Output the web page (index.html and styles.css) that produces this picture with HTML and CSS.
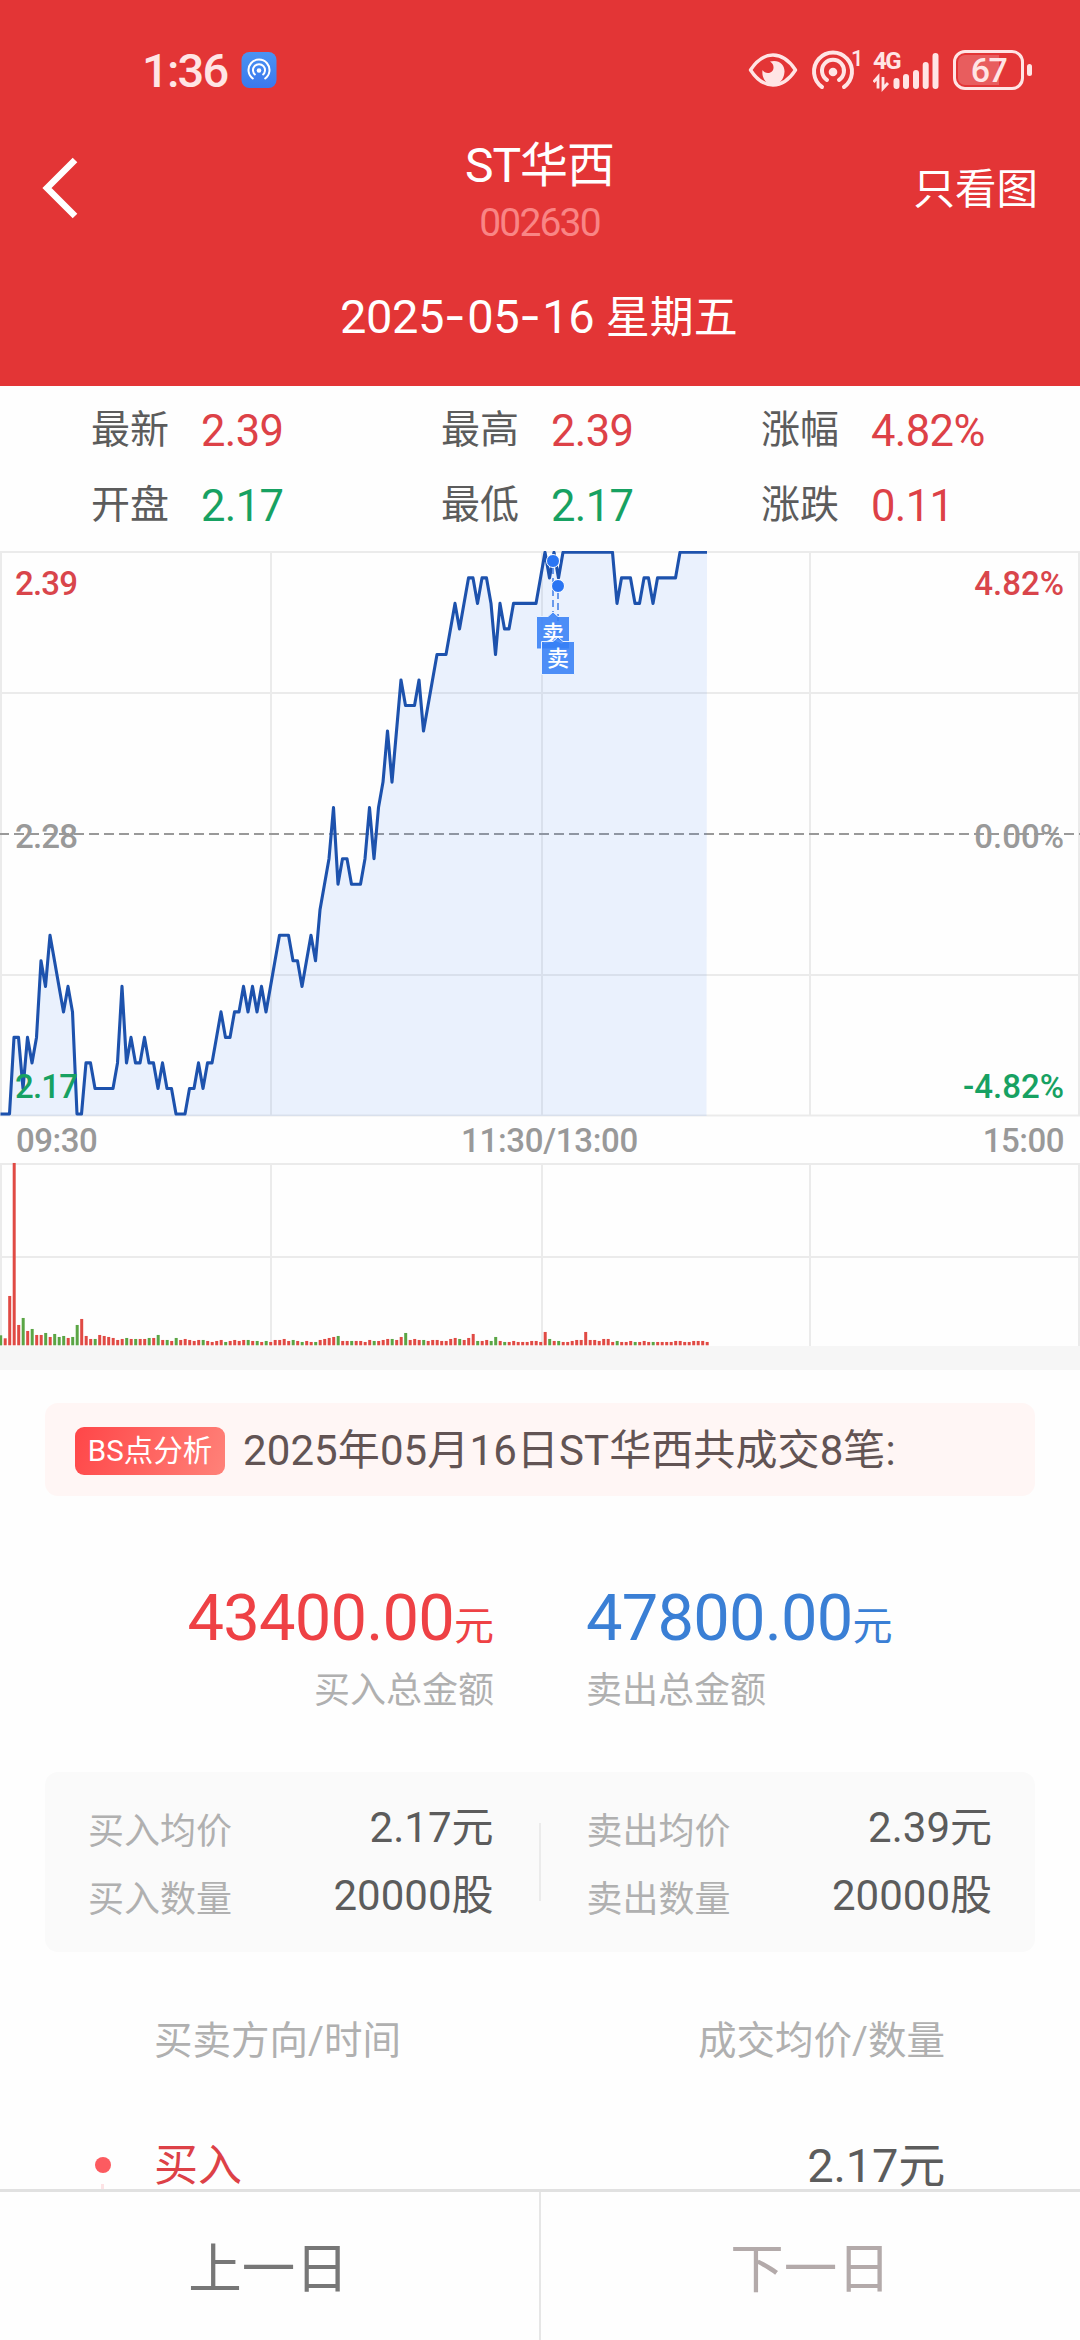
FILE: index.html
```html
<!DOCTYPE html>
<html lang="zh-CN">
<head>
  <meta charset="UTF-8">
  <title>ST华西 002630</title>
  <link rel="stylesheet" href="styles.css">
</head>
<body>

  <header class="header">
    <div class="status-bar">
      <div class="status-left">
        <span class="clock">1:36</span>
        <svg class="app-icon" width="36" height="38" viewBox="0 0 36 38">
          <defs>
            <linearGradient id="appBg" x1="0" y1="0" x2="0" y2="1">
              <stop offset="0" stop-color="#4a93f2" />
              <stop offset="1" stop-color="#3a78ee" />
            </linearGradient>
          </defs>
          <rect x="0.5" y="1" width="35" height="36" rx="8" fill="url(#appBg)" />
          <g fill="none" stroke="#fff" stroke-width="2">
            <path d="M12.5 28 A10.5 10.5 0 1 1 23.5 28" />
            <path d="M14.5 24 A6 6 0 1 1 21.5 24" />
          </g>
          <circle cx="18" cy="19.5" r="2.3" fill="#fff" />
        </svg>
      </div>
      <div class="status-right">
        <svg class="icon-eye" width="50" height="36" viewBox="0 0 50 36">
          <path d="M2.5 18 C10 6.500 17 3 25 3 S40 6.500 47.500 18 C40 29.500 33 33 25 33 S10 29.500 2.500 18 Z" fill="none" stroke="#ffe5e5" stroke-width="3.400" stroke-linejoin="round" />
          <path d="M22 9.500 C31 7 37 13 36.500 20 C36 28 31 32.500 25 32.500 C18 32.500 13.500 26 14.500 18 C17 22.500 25 22 25.500 16 C25.700 13 24.500 11 22 9.500 Z" fill="#ffe5e5" />
        </svg>
        <svg class="icon-hotspot" width="56" height="60" viewBox="0 -10 56 60">
          <g fill="none" stroke="#ffe5e5" stroke-width="4" stroke-linecap="round">
            <path d="M11 37 A19 19 0 1 1 33 37" />
            <path d="M16 30 A11 11 0 1 1 28 30" />
          </g>
          <circle cx="22" cy="22" r="4.300" fill="#ffe5e5" />
          <text x="40" y="16" class="tiny">1</text>
        </svg>
        <svg class="icon-signal" width="68" height="60" viewBox="0 -10 68 60">
          <text x="0" y="19" class="net">4G</text>
          <path d="M0.500 32 L5 27 V38.500 M10 27 V38.500 L15 33" fill="none" stroke="#ffe5e5" stroke-width="2.800" />
          <g stroke="#ffe5e5" stroke-width="6" stroke-linecap="round">
            <path d="M23.500 31 V36 M33 27 V36 M43 23 V36 M52.700 15 V36 M62.500 6 V36" />
          </g>
        </svg>
        <div class="battery">
          <div class="battery-level" style="width: 67%"></div>
          <span class="battery-text">67</span>
        </div>
        <div class="battery-tip"></div>
      </div>
    </div>

    <div class="nav">
      <svg class="back" width="40" height="64" viewBox="0 0 40 64">
        <path d="M37 4 L9 32 L37 60" fill="none" stroke="#fff" stroke-width="6.500" />
      </svg>
      <div class="title">
        <div class="stock-name">ST华西</div>
        <div class="stock-code">002630</div>
      </div>
      <div class="only-chart">只看图</div>
    </div>

    <div class="date">2025<i>-</i>05<i>-</i>16 <span class="week">星期五</span></div>
  </header>

  <section class="quotes">
    <div class="quote"><span>最新</span><b class="red">2.39</b></div>
    <div class="quote"><span>最高</span><b class="red">2.39</b></div>
    <div class="quote"><span>涨幅</span><b class="red">4.82%</b></div>
    <div class="quote"><span>开盘</span><b class="green">2.17</b></div>
    <div class="quote"><span>最低</span><b class="green">2.17</b></div>
    <div class="quote"><span>涨跌</span><b class="red">0.11</b></div>
  </section>

  <section class="charts">
    <svg class="price-chart" width="1080" height="566" viewBox="0 0 1080 566">
      <g class="grid">
        <path d="M0 1 H1080 M0 142 H1080 M0 424 H1080 M0 564.500 H1080" />
        <path d="M1 0 V565 M271 0 V565 M542 0 V565 M810 0 V565 M1079 0 V565" />
      </g>
      <line x1="0" y1="283" x2="1080" y2="283" class="middle-line" />
      <path id="area" class="area" />
      <path id="line" class="line" />
      <g class="axis">
        <text x="15" y="44" class="up">2.39</text>
        <text x="15" y="297">2.28</text>
        <text x="15" y="547" class="down">2.17</text>
        <text x="1064" y="44" class="up end">4.82%</text>
        <text x="1064" y="297" class="end">0.00%</text>
        <text x="1064" y="547" class="down end">-4.82%</text>
      </g>
      <g class="trades">
        <path d="M553 16 V62 M558 41 V86" class="trade-stem" />
        <circle cx="553" cy="10" r="6.500" />
        <circle cx="558" cy="35" r="6.500" />
        <path d="M536.500 65.500 H548 L553 61 L558 65.500 H569.500 V98 H536.500 Z" class="flag" />
        <text x="553" y="90">卖</text>
        <path d="M541.500 90.500 H553 L558 86 L563 90.500 H574.500 V123.500 H541.500 Z" class="flag" />
        <text x="558" y="115">卖</text>
      </g>
    </svg>
    <div class="times">
      <span>09:30</span>
      <span class="noon">11:30/13:00</span>
      <span>15:00</span>
    </div>
    <svg class="volume-chart" width="1080" height="184" viewBox="0 0 1080 184">
      <g class="grid">
        <path d="M0 2 H1080 M0 95 H1080" />
        <path d="M1 1 V184 M271 1 V184 M542 1 V184 M810 1 V184 M1079 1 V184" />
      </g>
      <g id="bars"></g>
    </svg>
  </section>

  <main class="detail">
    <div class="notice">
      <span class="badge">BS点分析</span>
      <span class="notice-text">2025年05月16日ST华西共成交8笔:</span>
    </div>

    <div class="totals">
      <div class="total buy">
        <div class="amount">43400.00<small>元</small></div>
        <div class="caption">买入总金额</div>
      </div>
      <div class="total sell">
        <div class="amount">47800.00<small>元</small></div>
        <div class="caption">卖出总金额</div>
      </div>
    </div>

    <div class="summary">
      <div class="side">
        <div class="pair"><span>买入均价</span><b>2.17元</b></div>
        <div class="pair"><span>买入数量</span><b>20000股</b></div>
      </div>
      <div class="divider"></div>
      <div class="side">
        <div class="pair"><span>卖出均价</span><b>2.39元</b></div>
        <div class="pair"><span>卖出数量</span><b>20000股</b></div>
      </div>
    </div>

    <div class="list-head">
      <span>买卖方向/时间</span>
      <span>成交均价/数量</span>
    </div>

    <div class="list-row">
      <div class="timeline"><i class="dot"></i><i class="thread"></i></div>
      <span class="direction">买入</span>
      <span class="price">2.17元</span>
    </div>
  </main>

  <footer class="footer">
    <div class="day prev">上一日</div>
    <div class="day next">下一日</div>
  </footer>

  <script>
    const STEP = 4.5;

    // price per minute, in cents above 2.17
    const prices = [
      0, 0, 0, 3, 3, 1, 3, 2, 3, 6, 5, 7, 6, 5, 4, 5, 4, 0, 0, 2,
      2, 1, 1, 1, 1, 1, 2, 5, 2, 3, 2, 2, 3, 2, 2, 1, 2, 1, 1, 0,
      0, 0, 1, 1, 2, 1, 2, 2, 3, 4, 3, 3, 4, 4, 5, 4, 5, 4, 5, 4,
      5, 6, 7, 7, 7, 6, 6, 5, 6, 7, 6, 8, 9, 10, 12, 9, 10, 10, 9, 9,
      9, 10, 12, 10, 12, 13, 15, 13, 15, 17, 16, 16, 16, 17, 15, 16, 17, 18, 18, 18,
      19, 20, 19, 20, 21, 21, 20, 21, 21, 20, 18, 20, 19, 19, 20, 20, 20, 20, 20, 20,
      21, 22, 21, 22, 21, 22, 22, 22, 22, 22, 22, 22, 22, 22, 22, 22, 22, 20, 21, 21,
      21, 20, 20, 21, 21, 20, 21, 21, 21, 21, 21, 22, 22, 22, 22, 22, 22, 22
    ];

    // bar height per minute, negative = falling (green)
    const volumes = [
      -30, 21, 148, 547, 61, -82, 43, -49, 31, 31, -37, 25, -34, -25, -28, 22, -25, -61, 79, 28,
      19, -19, 31, 28, 25, 22, 16, 19, -22, 19, -19, 19, 19, -22, 22, -31, 16, -16, 13, -22,
      16, 19, 16, 13, 16, -16, 13, 10, 13, 16, -10, 13, 16, 13, 16, -16, 13, -13, 10, -13,
      10, 16, 16, 19, 13, -16, 13, -10, 13, 10, -10, 16, 19, 22, 25, -28, 13, 13, -13, 13,
      13, 10, 16, -13, 13, 16, 19, -19, 16, 25, -37, 16, 19, 16, -16, 13, 16, 16, 13, 13,
      19, 22, -19, 16, 22, 34, -13, 13, 16, -13, -25, 13, -10, 10, 13, 10, 10, 10, 13, 13,
      10, 40, -19, 13, -13, 10, 10, 13, 16, 16, 40, 16, 16, 13, 19, 19, 10, -13, 10, 10,
      13, -10, 10, 13, 10, -10, 10, 10, 10, 10, 13, 13, 10, 10, 13, 13, 13, 10
    ];

    const points = prices.map((p, i) => (i * STEP + 0.5) + " " + (563 - p * 25.53).toFixed(1));
    const lastX = (prices.length - 1) * STEP;
    document.getElementById("line").setAttribute("d", "M" + points.join(" L"));
    document.getElementById("area").setAttribute("d", "M" + points.join(" L") + " L" + lastX + " 565 L0 565 Z");

    let bars = "";
    volumes.forEach((v, i) => {
      const h = Math.abs(v) / 3;
      bars += `<rect x="${i * STEP - 0.8}" y="${183.3 - h}" width="3" height="${h}" class="${v < 0 ? "fall" : "rise"}" />`;
    });
    document.getElementById("bars").innerHTML = bars;
  </script>

</body>
</html>
```

FILE: styles.css
```css
* {
  box-sizing: border-box;
}
body {
  margin: 0;
  width: 1080px;
  height: 2340px;
  overflow: hidden;
  display: flex;
  flex-direction: column;
  background: #fefefe;
  color: #5c5c5c;
  font-family: Roboto, "Noto Sans CJK SC", sans-serif;
}
b, i {
  font-weight: 400;
  font-style: normal;
}
svg {
  display: block;
}
.red {
  color: #dd4147;
}
.green {
  color: #17a162;
}

/* header */
.header {
  height: 386px;
  background: #e33536;
  color: #fff;
}
.status-bar {
  height: 140px;
  padding: 0 48px 0 142px;
  display: flex;
  justify-content: space-between;
  align-items: center;
}
.status-left,
.status-right {
  display: flex;
  align-items: center;
}
.clock {
  font-size: 47px;
  font-weight: 500;
  letter-spacing: -1.8px;
  line-height: 56px;
  padding-top: 2px;
  color: #ffe5e5;
  width: 99px;
}
.icon-hotspot {
  margin-left: 13px;
}
.icon-signal {
  margin-left: 6px;
}
.tiny {
  font-size: 22px;
  font-weight: 500;
  fill: #ffe5e5;
}
.net {
  font-size: 24px;
  font-weight: 700;
  letter-spacing: -1.5px;
  fill: #ffe5e5;
}
.battery {
  margin-left: 12px;
  width: 71px;
  height: 40px;
  border: 3px solid #ffe5e5;
  border-radius: 12px;
  padding: 2px;
  position: relative;
}
.battery-level {
  height: 100%;
  background: rgba(255, 255, 255, 0.2);
  border-radius: 7px 0 0 7px;
}
.battery-text {
  position: absolute;
  left: 0;
  right: 0;
  top: 0;
  text-align: center;
  font-size: 34px;
  font-weight: 500;
  letter-spacing: -1.5px;
  line-height: 35px;
  color: #ffe5e5;
}
.battery-tip {
  margin-left: 3px;
  width: 5px;
  height: 12px;
  border-radius: 3px;
  background: #ffe5e5;
}
.nav {
  height: 116px;
  padding: 0 42px 0 38px;
  display: grid;
  grid-template-columns: 200px 1fr 197px;
}
.back {
  margin-top: 16px;
}
.title {
  text-align: center;
}
.stock-name {
  font-size: 48px;
  line-height: 52px;
  letter-spacing: -1px;
}
.stock-code {
  font-size: 39px;
  line-height: 42px;
  margin-top: 10px;
  letter-spacing: -1.8px;
  color: #f98585;
}
.only-chart {
  text-align: right;
  font-size: 41.5px;
  line-height: 99px;
}
.date {
  padding-left: 340px;
  font-size: 47px;
  letter-spacing: -0.4px;
  line-height: 119px;
  white-space: pre;
}
.date i {
  font-family: Inter;
  letter-spacing: 1.5px;
}
.week {
  font-size: 44px;
  letter-spacing: 0;
}

/* quotes */
.quotes {
  height: 165px;
  padding: 6px 0 9px 91px;
  display: grid;
  grid-template-columns: 350px 320px 1fr;
}
.quote {
  display: flex;
  align-items: center;
  font-size: 39px;
}
.quote span {
  width: 110px;
  line-height: 60px;
}
.quote b {
  font-size: 43.5px;
  letter-spacing: -0.6px;
  padding-top: 3px;
}

/* charts */
.charts {
  border-bottom: 24px solid #f6f6f6;
}
.grid {
  fill: none;
  stroke: #ebebeb;
  stroke-width: 2;
}
.middle-line {
  stroke: #999;
  stroke-width: 2;
  stroke-dasharray: 10 5;
  stroke-dashoffset: 1;
}
.area {
  fill: rgba(60, 130, 250, 0.1);
}
.line {
  fill: none;
  stroke: #1d52ad;
  stroke-width: 3.1;
  stroke-linejoin: round;
}
.axis text {
  font-size: 33px;
  font-weight: 500;
  letter-spacing: -0.8px;
  fill: #999;
}
.axis .up {
  fill: #d9454b;
}
.axis .down {
  fill: #17a162;
}
.axis .end {
  text-anchor: end;
  letter-spacing: 0;
}
.trades circle {
  fill: #2a75f3;
  stroke: #fff;
  stroke-width: 1;
}
.trade-stem {
  fill: none;
  stroke: #4a84e6;
  stroke-width: 1.6;
  stroke-dasharray: 7 4;
}
.flag {
  fill: rgba(55, 128, 246, 0.88);
  stroke: #e8f2ff;
  stroke-width: 1;
}
.trades text {
  font-size: 22px;
  font-weight: 500;
  fill: #fff;
  text-anchor: middle;
}
.times {
  height: 45px;
  padding: 0 16px 0 16px;
  display: flex;
  justify-content: space-between;
  font-size: 33px;
  font-weight: 500;
  letter-spacing: -0.5px;
  line-height: 47px;
  color: #999;
}
.noon {
  padding-left: 19px;
  letter-spacing: -0.3px;
}
.rise {
  fill: #e04a44;
}
.fall {
  fill: #5aa545;
}

/* trade detail */
.detail {
  flex: 1;
  min-height: 0;
  overflow: hidden;
  padding: 33px 45px 0;
}
.notice {
  height: 93px;
  padding-left: 30px;
  display: flex;
  align-items: center;
  border-radius: 13px;
  background: #fff6f5;
}
.badge {
  width: 150px;
  height: 48px;
  line-height: 49px;
  margin-top: 2px;
  border-radius: 9px;
  background: linear-gradient(110deg, #ff4648, #ff8279);
  color: #fff;
  font-size: 29.5px;
  text-align: center;
  white-space: nowrap;
}
.notice-text {
  margin-left: 18px;
  padding-top: 3px;
  font-size: 42px;
  letter-spacing: 0.1px;
  line-height: 60px;
  color: #625454;
  white-space: nowrap;
}
.totals {
  margin-top: 84px;
  display: grid;
  grid-template-columns: 449px 1fr;
  column-gap: 92px;
}
.buy {
  text-align: right;
  color: #ee4145;
}
.sell {
  color: #3a7fd5;
}
.amount {
  height: 76px;
  font-size: 65px;
  letter-spacing: -0.8px;
  line-height: 76px;
  white-space: nowrap;
}
.amount small {
  font-size: 40px;
  letter-spacing: 0;
}
.caption {
  margin-top: 9px;
  font-size: 36px;
  line-height: 52px;
  color: #b0b0b0;
}
.summary {
  margin-top: 55px;
  height: 180px;
  padding: 20px 43px;
  display: flex;
  align-items: center;
  border-radius: 13px;
  background: #fafafa;
}
.side {
  width: 406px;
}
.divider {
  width: 2px;
  height: 78px;
  margin: 0 46px 0 45px;
  background: #ebebeb;
}
.pair {
  height: 68px;
  display: flex;
  justify-content: space-between;
  align-items: center;
  font-size: 36px;
  color: #b0b0b0;
}
.pair b {
  font-size: 42px;
  line-height: 60px;
  color: #5c5c5c;
}
.list-head {
  margin-top: 59px;
  padding: 0 90px 0 109px;
  display: flex;
  justify-content: space-between;
  font-size: 38.5px;
  line-height: 60px;
  color: #b0b0b0;
}
.list-row {
  margin-top: 65px;
  height: 60px;
  padding-right: 90px;
  display: flex;
  align-items: center;
  line-height: 60px;
}
.timeline {
  width: 109px;
  padding: 21px 0 0 50px;
  align-self: flex-start;
}
.dot {
  display: block;
  width: 16px;
  height: 16px;
  border-radius: 50%;
  background: #fc5b60;
}
.thread {
  display: block;
  width: 3px;
  height: 15px;
  margin: 11px 0 0 6px;
  background: #fde3e5;
}
.direction {
  flex: 1;
  font-size: 44px;
  color: #dd4147;
}
.price {
  font-size: 47px;
  letter-spacing: -0.2px;
}

/* footer */
.footer {
  height: 151px;
  border-top: 3px solid #e1e1e1;
  display: flex;
}
.day {
  width: 539px;
  text-align: center;
  font-size: 53.5px;
  line-height: 156px;
}
.prev {
  width: 541px;
  padding-right: 2px;
  border-right: 2px solid #e6e6e6;
  color: #777;
}
.next {
  color: #b3aaaa;
}
```
